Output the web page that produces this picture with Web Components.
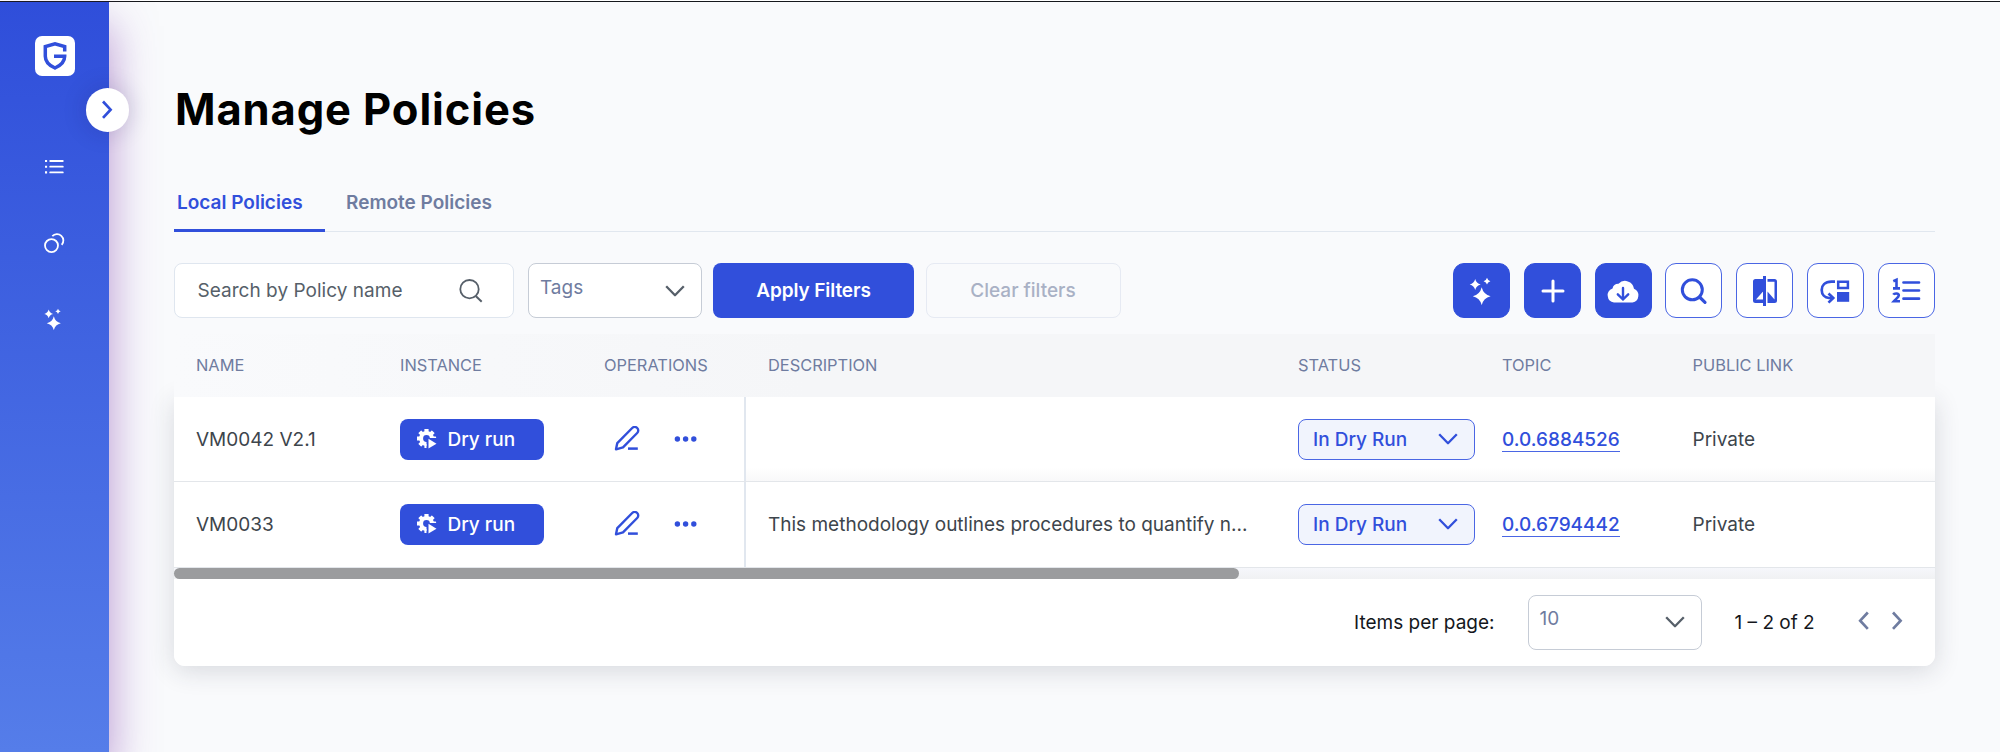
<!DOCTYPE html>
<html lang="en"><head><meta charset="utf-8"><title>Manage Policies</title>
<style>
html,body{margin:0;height:100%;overflow:hidden}
body{font-family:Inter,"Liberation Sans",sans-serif;background:#f9fafc}
</style></head><body>
<policy-app></policy-app>
<script>
const define=(name,css,html)=>customElements.define(name,class extends HTMLElement{
  connectedCallback(){
    if(this.shadowRoot)return;
    const attrs=k=>this.getAttribute(k)||'';
    this.attachShadow({mode:'open'}).innerHTML='<style>*{box-sizing:border-box}svg{display:block;flex:none}'+css+'</style>'+(typeof html==='function'?html(attrs):html);
  }
});
// four-pointed sparkle centred on (x, y) with radius r
const sparkle=(x,y,r)=>{const k=r*.24;return `<path fill="currentColor" d="M${x} ${y-r}Q${x+k*.8} ${y-k*.8} ${x+r} ${y}Q${x+k*.8} ${y+k*.8} ${x} ${y+r}Q${x-k*.8} ${y+k*.8} ${x-r} ${y}Q${x-k*.8} ${y-k*.8} ${x} ${y-r}z"/>`};
const teeth=[0,45,90,135,180,225,270,315].map(a=>`<rect x="7.400" y="-.1" width="4.200" height="4" rx=".6" transform="rotate(${a} 9.500 9.500)"/>`).join('');
const ICONS={
 stars:[28,28,sparkle(13.7,19.2,8.9)+sparkle(7.2,7.5,5.5)+sparkle(19,4.2,3.4)],
 plus:[28,28,'<path d="M14 4v20M4 14h20" stroke="currentColor" stroke-width="3" stroke-linecap="round"/>'],
 cloud:[34,28,'<path d="M8 25.500a7.300 7.300 0 0 1-1.500-14.100A6 6 0 0 1 12.500 6.800 9 9 0 0 1 28 11.800 7.200 7.200 0 0 1 26.500 25.500z" fill="currentColor"/><path d="M17 11v11.500M11.800 17.300l5.200 5.200 5.200-5.200" fill="none" stroke="#314fdb" stroke-width="2.400" stroke-linecap="round" stroke-linejoin="round"/>'],
 find:[28,28,'<circle cx="12.300" cy="12.800" r="10" fill="none" stroke="currentColor" stroke-width="3"/><path d="M19.500 20l5.500 5.300" stroke="currentColor" stroke-width="3.200" stroke-linecap="round"/>'],
 compare:[28,32,'<path d="M12 4H4.500A2.500 2.500 0 0 0 2 6.500v19A2.500 2.500 0 0 0 4.500 28H12v-3.500H5l7-8zM12 1h3v30h-3zM16.500 4h7A2.500 2.500 0 0 1 26 6.500v19a2.500 2.500 0 0 1-2.500 2.500h-7V16.500l7 8V6.700h-7z" fill="currentColor"/>'],
 move:[32,28,'<path d="M16 4.700h-3.500C5.700 4.700 2.700 8.700 2.700 13c0 4.500 3.200 7.600 7.300 8h3.500" fill="none" stroke="currentColor" stroke-width="2.700"/><path d="M9.500 16.500L14.200 21l-4.700 4.600" fill="none" stroke="currentColor" stroke-width="2.700"/><path d="M19.200 4.800h9.700v6.200h-9.700z" fill="none" stroke="currentColor" stroke-width="2.500"/><path d="M18 15h12.200v9.800H18z" fill="currentColor"/>'],
 numbers:[30,28,'<path d="M2.300 4.200L5.500 2.800v8.500M2 11.400h7M2.300 17.700c.9-1.600 5.600-1.900 5.500.7-.1 1.600-2 2.800-4.800 5.800h6" fill="none" stroke="currentColor" stroke-width="2.600"/><path d="M12.500 5.500h15.500M12.500 13.500h15.500M12.500 21.700h15.500" stroke="currentColor" stroke-width="2.700" stroke-linecap="round"/>'],
 search:[24,26,'<circle cx="10.500" cy="11.200" r="9.200" fill="none" stroke="currentColor" stroke-width="1.800"/><path d="M17 18.200l5.700 5.500" stroke="currentColor" stroke-width="2"/>'],
 down:[20,12,'<path d="M1.200 1.200l8.800 9 8.800-9" fill="none" stroke="currentColor" stroke-width="2.300" stroke-linejoin="round"/>'],
 left:[12,20,'<path d="M9.800 1.500L2.200 9.700l7.600 8.200" fill="none" stroke="currentColor" stroke-width="2.700"/>'],
 right:[12,20,'<path d="M2 1.500l7.600 8.200L2 17.900" fill="none" stroke="currentColor" stroke-width="2.700"/>'],
 list:[20,16,'<path d="M6.200 2h12.600M6.200 7.700h12.600M6.200 13.400h12.600" stroke="currentColor" stroke-width="1.800" stroke-linecap="round"/><path d="M1 .9h2.100v2.100H1zM1 6.700h2.100v2.100H1zM1 12.300h2.100v2.100H1z" fill="currentColor"/>'],
 rings:[22,22,'<circle cx="8.500" cy="13.600" r="6.500" fill="none" stroke="currentColor" stroke-width="1.800"/><path d="M9.300 4.200A6.300 6.300 0 1 1 18.700 12.800" fill="none" stroke="currentColor" stroke-width="1.800"/>'],
 gear:[20,20,`<defs><clipPath id="c"><path d="M0 0h20v9h-8.500L9.500 8v12H0z"/></clipPath></defs><g clip-path="url(#c)" fill="currentColor">${teeth}<circle cx="9.500" cy="9.500" r="5.400" fill="none" stroke="currentColor" stroke-width="4"/></g><path d="M11.500 9.800l8 4.900-8 4.900z" fill="currentColor"/>`],
 pen:[26,26,'<path d="M2 23.300l1.300-6.200L18.200 2a3.500 3.500 0 0 1 5 5L9 21.400z" fill="none" stroke="currentColor" stroke-width="2.400" stroke-linejoin="round"/><path d="M14 22.600h9.800" stroke="currentColor" stroke-width="2.500"/>'],
 dots:[24,8,'<g fill="currentColor"><circle cx="3.400" cy="4" r="2.700"/><circle cx="11.600" cy="4" r="2.700"/><circle cx="19.800" cy="4" r="2.700"/></g>'],
 logo:[24,28,'<path d="M21.700 9.500V4.600L12 1.800 2.300 4.600v9.600c0 6 3.500 9.100 9.700 11.800 6.200-2.700 9.700-5.800 9.700-11.700H11" fill="none" stroke="currentColor" stroke-width="3.500"/>']
};
define('x-icon',':host{display:inline-flex}',a=>{const[w,h,p]=ICONS[a('name')];const k=+a('scale')||1;return `<svg width="${w*k}" height="${h*k}" viewBox="0 0 ${w} ${h}" fill="none">${p}</svg>`});
define('nav-rail',`:host{position:relative;display:flex;flex-direction:column;align-items:center;width:109px;height:750px;flex:none;background:linear-gradient(#2f4eda,#557de9);box-shadow:0 24px 46px rgba(119,50,170,.52);color:#fff;z-index:1}
.logo{width:40px;height:40px;margin-top:33.500px;border-radius:7px;background:#fff;color:#314fdb;display:flex;align-items:center;justify-content:center}
nav{display:flex;flex-direction:column;align-items:center;margin-top:69.500px;gap:32px}nav x-icon{height:44px;align-items:center}
.toggle{position:absolute;left:85.500px;top:86px;width:43.500px;height:43.500px;border-radius:50%;background:#fff;color:#314fdb;display:flex;align-items:center;justify-content:center;box-shadow:0 0 24px rgba(30,20,90,.2)}`,
`<div class="logo"><x-icon name="logo"></x-icon></div><nav><x-icon name="list"></x-icon><x-icon name="rings"></x-icon><x-icon name="stars" scale=".79"></x-icon></nav><div class="toggle"><x-icon name="right"></x-icon></div>`);
define('tab-bar',`:host{display:flex;height:56px;border-bottom:1.500px solid #e1e7ef;font-size:19px;font-weight:600;line-height:52px;color:#6f7ca0}
div{padding:1px 20px 0 3px;height:56px;width:151px;margin-right:18px;white-space:nowrap}.on{color:#314fdb;border-bottom:3px solid #314fdb}`,`<div class="on"><slot name="on"></slot></div><div><slot></slot></div>`);
define('tool-button',`:host{display:flex;align-items:center;justify-content:center;width:57px;height:55px;border-radius:11px;border:1.500px solid #4a66e4;background:#fff;color:#314fdb}:host([solid]){background:#314fdb;color:#fff;border-color:#314fdb}`,a=>`<x-icon name="${a('icon')}"></x-icon>`);
define('select-box',`:host{display:flex;align-items:center;justify-content:space-between;box-sizing:border-box;width:174px;height:55px;padding:0 16px 0 11px;border:1.500px solid #c6ccd6;border-radius:8px;background:#fff;color:#6f7ca0;font-size:19px}span{margin-top:-7px}x-icon{color:#565f69}`,`<span><slot></slot></span><x-icon name="down"></x-icon>`);
define('filter-bar',`:host{display:flex;height:55px;align-items:center;font-size:19px}
.search{display:flex;align-items:center;justify-content:space-between;width:340px;height:55px;border:1.500px solid #dfe6ef;border-radius:8px;background:#fff;padding:0 30px 0 22.500px;color:#565f69;letter-spacing:.03px}
select-box{margin:0 11px 0 14px}.b{height:55px;display:flex;align-items:center;justify-content:center;border-radius:8px;font-weight:600}
.a{width:201px;background:#314fdb;color:#fff;letter-spacing:-.1px}.c{width:195px;margin-left:11.500px;border:1.500px solid #e6eaf3;color:#a9b1c5;font-weight:500}
.tools{display:flex;gap:13.700px;margin-left:auto}`,
`<div class="search"><span>Search by Policy name</span><x-icon name="search"></x-icon></div><select-box>Tags</select-box><div class="b a">Apply Filters</div><div class="b c">Clear filters</div><div class="tools"><tool-button solid icon="stars"></tool-button><tool-button solid icon="plus"></tool-button><tool-button solid icon="cloud"></tool-button><tool-button icon="find"></tool-button><tool-button icon="compare"></tool-button><tool-button icon="move"></tool-button><tool-button icon="numbers"></tool-button></div>`);
const GRID='display:grid;grid-template-columns:204px 204px 164px 530px 204px 190.500px 1fr;';
define('policy-head',`:host{${GRID}height:62.500px;align-items:center;color:#6f7ca0;font-size:16.400px;background:linear-gradient(90deg,#f9fafc,#f5f6f8 36%)}span{padding-left:22px;margin-top:-1px}`,
`<span>NAME</span><span>INSTANCE</span><span>OPERATIONS</span><span>DESCRIPTION</span><span>STATUS</span><span>TOPIC</span><span>PUBLIC LINK</span>`);
define('policy-row',`:host{${GRID}height:85.500px;background:#fff;border-bottom:1.500px solid #e3e6ea;color:#3d454c;font-size:19px}
div{padding-left:22px;display:flex;align-items:center;min-width:0;white-space:nowrap}
.ops{border-right:2px solid #e1e7ef;padding-left:32px;gap:34px;color:#314fdb}
.run{width:144px;height:41px;border-radius:8px;background:#314fdb;color:#fff;font-weight:500;display:flex;align-items:center;padding-left:16.500px;gap:11px}
.st{width:177px;height:41px;border:1.500px solid #4a66e4;border-radius:8px;background:#f1f4fd;color:#314fdb;font-weight:500;display:flex;align-items:center;justify-content:space-between;padding:0 16px 0 14px}
.link{color:#314fdb;font-weight:500;border-bottom:1.500px solid #4a66e4;line-height:23px;margin-top:2px}
:host([shade]) div{padding-top:1px}
:host([shade]) .r{background:linear-gradient(#fff 84%,#f8f8f9)}`,
a=>`<div><span>${a('name')}</span></div><div><span class="run"><x-icon name="gear"></x-icon><span>Dry run</span></span></div><div class="ops"><x-icon name="pen"></x-icon><x-icon name="dots"></x-icon></div><div class="r"><span>${a('desc')}</span></div><div class="r"><span class="st"><span>In Dry Run</span><x-icon name="down"></x-icon></span></div><div class="r"><span class="link">${a('topic')}</span></div><div class="r"><span>Private</span></div>`);
define('page-footer',`:host{display:flex;height:87px;align-items:center;justify-content:flex-end;background:#fff;border-radius:0 0 11px 11px;padding-right:32px;color:#14171c;font-size:19px}select-box{margin:0 33px 0 33px}.range{width:123px}.nav{display:flex;gap:21px;color:#6f7ca0;margin-top:-3px}`,
`<span>Items per page:</span><select-box>10</select-box><span class="range">1 – 2 of 2</span><div class="nav"><x-icon name="left"></x-icon><x-icon name="right"></x-icon></div>`);
define('policy-table',`:host{display:block;position:relative}.body{box-shadow:0 5px 26px rgba(40,45,60,.16);border-radius:0 0 11px 11px}.scroll{height:11px;background:linear-gradient(#f6f7fb,#f0f1f3)}.thumb{width:1065px;height:11px;border-radius:6px;background:#9b9c9e}policy-head{position:relative}`,
`<policy-head></policy-head><div class="body"><policy-row shade name="VM0042 V2.1" topic="0.0.6884526"></policy-row><policy-row name="VM0033" topic="0.0.6794442" desc="This methodology outlines procedures to quantify n..."></policy-row><div class="scroll"><div class="thumb"></div></div><page-footer></page-footer></div>`);
define('policy-app',`:host{display:block;border-top:1px solid #fff;height:751px}
.wrap{display:flex;align-items:flex-start;border-top:1px solid #16181c;height:751px}main{flex:1;padding:0 65.500px 0 65px;min-width:0}
h1{margin:0;padding:72px 0 0 1px;height:174px;line-height:70px;font-size:43.500px;letter-spacing:.9px;font-weight:700;color:#000;white-space:nowrap}filter-bar{margin:31px 0 16px}`,
`<div class="wrap"><nav-rail></nav-rail><main><h1><span>Manage Policies</span></h1><tab-bar><span slot="on">Local Policies</span><span>Remote Policies</span></tab-bar><filter-bar></filter-bar><policy-table></policy-table></main></div>`);
</script></body></html>
